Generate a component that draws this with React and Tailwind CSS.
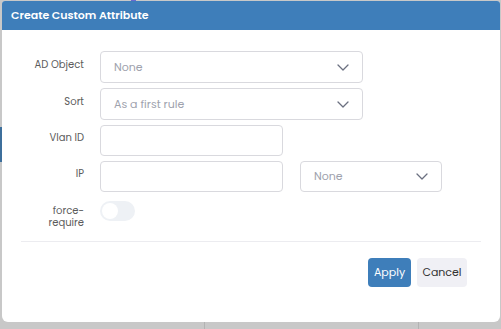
import { useState } from 'react';

const FONT = { fontFamily: 'Poppins, "Open Sans", "DejaVu Sans", sans-serif' };

function Chevron() {
  return (
    <svg width="12" height="7" viewBox="0 0 12 7" fill="none" className="shrink-0">
      <path d="M1 1l5 5 5-5" stroke="#6b7080" strokeWidth="1.3" strokeLinecap="round" strokeLinejoin="round" />
    </svg>
  );
}

function Select({ value, className }) {
  return (
    <div
      className={`rounded-[4px] border border-[#d9d9de] bg-white flex items-center justify-between pl-[13px] pr-[13px] text-[11px] text-[#9ea2ad] ${className}`}
    >
      <span>{value}</span>
      <Chevron />
    </div>
  );
}

function Row({ label, h, children }) {
  return (
    <div className={`flex items-center ${h}`}>
      <div className="w-[82px] text-right text-[10px] text-[#5c5c5c] -mt-[6px]">{label}</div>
      <div className="flex items-center ml-[16px] gap-[17px]">{children}</div>
    </div>
  );
}

export default function App() {
  const [force, setForce] = useState(false);

  return (
    <div className="relative w-[501px] h-[329px] bg-[#c8c8c8] overflow-hidden" style={FONT}>
      {/* background page bits */}
      <div className="absolute left-0 top-[127px] w-[2px] h-[35px] bg-[#3d6f9c]" />
      <div className="absolute left-[131px] top-0 w-[5px] h-[2px] bg-[#6a6ad0]" />
      <div className="absolute left-[204px] top-[322px] w-px h-[7px] bg-[#b3b3b3]" />
      <div className="absolute left-[418px] top-[322px] w-px h-[7px] bg-[#b3b3b3]" />

      <div className="absolute left-[2px] top-[1px] w-[498px] h-[321px] bg-white rounded-t-[3px] rounded-b-[6px] overflow-hidden">
        <div className="h-[29px] bg-[#3e7eba] flex items-center px-[9px] text-white text-[11px] font-semibold">
          Create Custom Attribute
        </div>

        <div className="pt-[21px] flex flex-col gap-[5px]">
          <Row label="AD Object" h="h-[32px]">
            <Select value="None" className="w-[263px] h-[32px]" />
          </Row>
          <Row label="Sort" h="h-[32px]">
            <Select value="As a first rule" className="w-[263px] h-[32px]" />
          </Row>
          <Row label="Vlan ID" h="h-[31px]">
            <div className="w-[183px] h-[31px] rounded-[4px] border border-[#d9d9de]" />
          </Row>
          <Row label="IP" h="h-[31px]">
            <div className="w-[183px] h-[31px] rounded-[4px] border border-[#d9d9de]" />
            <Select value="None" className="w-[142px] h-[31px]" />
          </Row>
        </div>

        <div className="flex mt-[9px] h-[28px]">
          <div className="w-[82px] text-right text-[10px] leading-[12px] text-[#5c5c5c] pt-[4px]">
            force-
            <br />
            require
          </div>
          <button
            type="button"
            onClick={() => setForce(!force)}
            className={`ml-[16px] w-[35px] h-[20px] rounded-full flex items-center px-[2px] ${force ? 'bg-[#3e7eba] justify-end' : 'bg-[#eef1f5] justify-start'}`}
          >
            <span className="w-[16px] h-[16px] rounded-full bg-white" />
          </button>
        </div>

        <div className="mx-[19px] mt-[12px] border-t border-[#ececf0]" />

        <div className="flex justify-end gap-[6px] pr-[33px] pt-[16px]">
          <button type="button" className="h-[29px] w-[43px] rounded-[4px] bg-[#3e7eba] text-white text-[11px]">
            Apply
          </button>
          <button type="button" className="h-[29px] w-[50px] rounded-[4px] bg-[#f0f0f5] text-[#333] text-[11px]">
            Cancel
          </button>
        </div>
      </div>
    </div>
  );
}
